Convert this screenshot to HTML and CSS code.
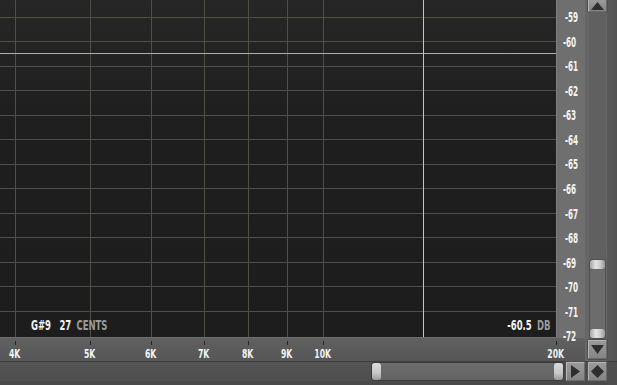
FILE: index.html
```html
<!DOCTYPE html>
<html>
<head>
<meta charset="utf-8">
<link rel="stylesheet" href="styles.css">
</head>
<body>
<div class="app">
  <div class="plot">
    <svg class="grid" width="556" height="337" viewBox="0 0 556 337">
      <g stroke="#4f4e47" stroke-width="1">
        <line x1="0" y1="17.5" x2="556" y2="17.5"/>
        <line x1="0" y1="41.5" x2="556" y2="41.5"/>
        <line x1="0" y1="66.5" x2="556" y2="66.5"/>
        <line x1="0" y1="90.5" x2="556" y2="90.5"/>
        <line x1="0" y1="115.5" x2="556" y2="115.5"/>
        <line x1="0" y1="139.5" x2="556" y2="139.5"/>
        <line x1="0" y1="164.5" x2="556" y2="164.5"/>
        <line x1="0" y1="188.5" x2="556" y2="188.5"/>
        <line x1="0" y1="213.5" x2="556" y2="213.5"/>
        <line x1="0" y1="237.5" x2="556" y2="237.5"/>
        <line x1="0" y1="262.5" x2="556" y2="262.5"/>
        <line x1="0" y1="286.5" x2="556" y2="286.5"/>
        <line x1="0" y1="311.5" x2="556" y2="311.5"/>
        <line x1="15.5" y1="0" x2="15.5" y2="337"/>
        <line x1="90.5" y1="0" x2="90.5" y2="337"/>
        <line x1="151.5" y1="0" x2="151.5" y2="337"/>
        <line x1="204.5" y1="0" x2="204.5" y2="337"/>
        <line x1="248.5" y1="0" x2="248.5" y2="337"/>
        <line x1="287.5" y1="0" x2="287.5" y2="337"/>
        <line x1="323.5" y1="0" x2="323.5" y2="337"/>
      </g>
      <line x1="0" y1="53.5" x2="556" y2="53.5" stroke="#aeada4" stroke-width="1"/>
      <line x1="423.5" y1="0" x2="423.5" y2="337" stroke="#c4c4c4" stroke-width="1"/>
    </svg>
    <div class="readout readout-left">
      <span class="hi">G#9</span><span class="hi gap-l">27</span><span class="lo gap-s">CENTS</span>
    </div>
    <div class="readout readout-right">
      <span class="hi">-60.5</span><span class="lo gap-s">DB</span>
    </div>
  </div>

  <div class="dbscale">
    <div class="dbrow"><i></i><span class="cond">-59</span></div>
    <div class="dbrow"><i class="long"></i><span class="cond">-60</span></div>
    <div class="dbrow"><i></i><span class="cond">-61</span></div>
    <div class="dbrow"><i></i><span class="cond">-62</span></div>
    <div class="dbrow"><i class="long"></i><span class="cond">-63</span></div>
    <div class="dbrow"><i></i><span class="cond">-64</span></div>
    <div class="dbrow"><i></i><span class="cond">-65</span></div>
    <div class="dbrow"><i class="long"></i><span class="cond">-66</span></div>
    <div class="dbrow"><i></i><span class="cond">-67</span></div>
    <div class="dbrow"><i></i><span class="cond">-68</span></div>
    <div class="dbrow"><i class="long"></i><span class="cond">-69</span></div>
    <div class="dbrow"><i></i><span class="cond">-70</span></div>
    <div class="dbrow"><i></i><span class="cond">-71</span></div>
    <div class="dbrow"><i class="long"></i><span class="cond">-72</span></div>
  </div>

  <div class="vscroll">
    <div class="btn btn-up">
      <svg width="13" height="8" viewBox="0 0 13 8"><polygon points="6.5,0 13,8 0,8" fill="#2e2e2e"/></svg>
    </div>
    <div class="vtrack">
      <div class="vthumb"><div class="vgrip"></div><div class="vgrip"></div></div>
    </div>
    <div class="btn btn-down">
      <svg width="13" height="9" viewBox="0 0 13 9"><polygon points="0,0 13,0 6.5,9" fill="#2e2e2e"/></svg>
    </div>
  </div>

  <div class="axis">
    <div class="tick" style="left:15px"><i></i><span class="cond">4K</span></div>
    <div class="tick" style="left:90px"><i></i><span class="cond">5K</span></div>
    <div class="tick" style="left:151px"><i></i><span class="cond">6K</span></div>
    <div class="tick" style="left:204px"><i></i><span class="cond">7K</span></div>
    <div class="tick" style="left:248px"><i></i><span class="cond">8K</span></div>
    <div class="tick" style="left:287px"><i></i><span class="cond">9K</span></div>
    <div class="tick" style="left:323px"><i></i><span class="cond">10K</span></div>
    <div class="tick" style="left:556px"><i></i><span class="cond">20K</span></div>
  </div>

  <div class="bottombar">
    <div class="htrack">
      <div class="hthumb"><div class="hgrip"></div><div class="hgrip"></div></div>
    </div>
    <div class="btn btn-right">
      <svg width="9" height="13" viewBox="0 0 9 13"><polygon points="0,0 9,6.5 0,13" fill="#2e2e2e"/></svg>
    </div>
    <div class="btn btn-diamond">
      <svg width="13" height="13" viewBox="0 0 13 13"><polygon points="6.5,0 13,6.5 6.5,13 0,6.5" fill="#2e2e2e"/></svg>
    </div>
    <div class="edge"></div>
  </div>
</div>
</body>
</html>
```

FILE: styles.css
```css
html, body {
  margin: 0;
  padding: 0;
  width: 617px;
  height: 385px;
  overflow: hidden;
  background: #4c4c4c;
}

.app {
  display: grid;
  grid-template-columns: 556px 29px 32px;
  grid-template-rows: 337px 24px 24px;
  width: 617px;
  height: 385px;
  font-family: "DejaVu Sans Condensed", "DejaVu Sans", sans-serif;
  font-weight: bold;
}

.cond {
  display: inline-block;
  transform: scaleX(0.66);
  transform-origin: center;
  white-space: nowrap;
}

/* plot */
.plot {
  grid-column: 1;
  grid-row: 1;
  position: relative;
  background: linear-gradient(#262626, #1e1e1e 40%, #1d1d1d);
  overflow: hidden;
}
.grid { display: block; }

.readout {
  position: absolute;
  top: 316px;
  display: flex;
  align-items: center;
  font-size: 14.5px;
  line-height: 18px;
  white-space: nowrap;
  transform: scaleX(0.65);
}
.readout-left {
  left: 31px;
  transform-origin: left center;
}
.readout-right {
  right: 6px;
  transform-origin: right center;
}
.gap-l { margin-left: 13px; }
.gap-s { margin-left: 8px; }
.hi { color: #f2f2f2; }
.lo { color: #9a9a9a; }

/* dB scale */
.dbscale {
  grid-column: 2;
  grid-row: 1;
  position: relative;
  z-index: 1;
  display: flex;
  flex-direction: column;
  padding-top: 5px;
  background: #6f6f6f;
  border-left: 1px solid #7e7e7e;
  box-sizing: border-box;
}
.dbrow {
  height: 24.54px;
  flex: none;
  display: flex;
  align-items: center;
  color: #f4f4f4;
  font-size: 13.5px;
}
.dbrow i {
  display: block;
  width: 4px;
  height: 1px;
  margin-left: 3px;
  background: #2a2a2a;
}
.dbrow i.long {
  width: 6px;
  height: 2px;
  background: #1a1a1a;
}
.dbrow .cond {
  margin-left: 5px;
  transform: scaleX(0.6);
  transform-origin: left center;
}
.dbrow i.long + .cond { margin-left: 3px; }

/* vertical scroll */
.vscroll {
  grid-column: 3;
  grid-row: 1 / span 2;
  display: flex;
  flex-direction: column;
  background: linear-gradient(90deg, #666 0, #666 22px, #5a5a5a 22px, #525252);
  padding-left: 3px;
  padding-right: 10px;
  padding-bottom: 2px;
}
.btn {
  box-sizing: border-box;
  display: flex;
  align-items: center;
  justify-content: center;
  background: linear-gradient(#9a9a9a, #858585);
  border: 1px solid #b4b4b4;
  border-right-color: #6a6a6a;
  border-bottom-color: #6a6a6a;
  border-radius: 1px;
  box-shadow: 0 0 0 1px #4e4e4e;
}
.btn-up {
  height: 13px;
  width: 19px;
  margin-top: -1px;
  align-items: flex-end;
  padding-bottom: 1px;
}
.btn-down {
  height: 19px;
  width: 19px;
  margin-top: 1px;
}
.vtrack {
  flex: 1;
  display: flex;
  flex-direction: column;
  justify-content: flex-end;
  margin: 0 1px;
  background: #606060;
}
.vthumb {
  height: 80px;
  box-sizing: border-box;
  display: flex;
  flex-direction: column;
  justify-content: space-between;
  background: #6c6c6c;
  border: 1px solid #505050;
  border-radius: 3px;
}
.vgrip {
  height: 9px;
  border-radius: 3px;
  background: linear-gradient(90deg, #a8a8a8, #e4e4e4 40%, #c8c8c8 70%, #9a9a9a);
}

/* frequency axis */
.axis {
  grid-column: 1 / span 2;
  grid-row: 2;
  position: relative;
  background: linear-gradient(#616161, #5b5b5b 50%, #565656);
  border-top: 1px solid #6f6f6f;
  box-sizing: border-box;
}
.tick {
  position: absolute;
  top: 3px;
  width: 0;
  display: flex;
  flex-direction: column;
  align-items: center;
}
.tick i {
  display: block;
  width: 1px;
  height: 4px;
  background: #222;
  flex: none;
}
.tick .cond {
  color: #f2f2f2;
  font-size: 13px;
  line-height: 14px;
  margin-top: 2px;
}

/* bottom bar */
.bottombar {
  grid-column: 1 / span 3;
  grid-row: 3;
  display: flex;
  align-items: flex-start;
  background: #4a4a4a;
  border-top: 1px solid #3e3e3e;
  box-sizing: border-box;
}
.htrack {
  width: 564px;
  height: 19px;
  display: flex;
  background: linear-gradient(#545454, #4e4e4e);
}
.hthumb {
  margin-left: 371px;
  flex: 1;
  display: flex;
  justify-content: space-between;
  box-sizing: border-box;
  background: linear-gradient(#6c6c6c, #646464);
  border: 1px solid #3c3c3c;
  border-radius: 3px;
}
.hgrip {
  width: 9px;
  border-radius: 3px;
  background: linear-gradient(#dcdcdc, #c6c6c6 60%, #9a9a9a);
}
.btn-right {
  width: 19px;
  height: 19px;
  margin-left: 2px;
}
.btn-diamond {
  width: 19px;
  height: 19px;
  margin-left: 3px;
}
.edge {
  flex: 1;
  align-self: stretch;
  background: #4e4e4e;
}
```
